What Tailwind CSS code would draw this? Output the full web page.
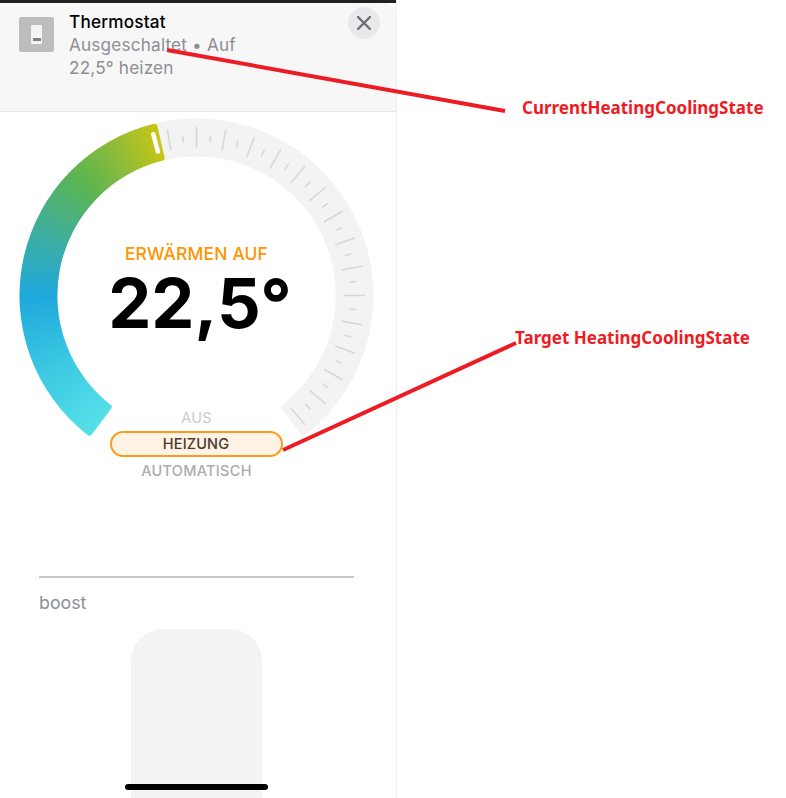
<!doctype html>
<html lang="de">
<head>
<meta charset="utf-8">
<script src="https://cdn.jsdelivr.net/npm/@tailwindcss/browser@4"></script>
</head>
<body class="bg-white font-['Inter',sans-serif]">
<div class="relative w-[786px] h-[798px] overflow-hidden bg-white">
  <div class="w-[397px] h-[798px] flex flex-col border-r border-[#efefef] overflow-hidden">
    <div class="h-[3px] shrink-0 bg-[#222222]"></div>
    <header class="h-[109px] shrink-0 flex items-start bg-[#f7f7f7] border-b border-[#e6e6e6] rounded-tr-xl pl-[19px] pr-[16px]">
      <div class="w-[35px] h-[35px] mt-[14px] bg-[#bdbdbd] rounded-[2px] flex items-center justify-center shrink-0">
        <div class="w-[11px] h-[19px] bg-[#f4f4f4] rounded-[1px] flex items-end justify-center pb-[3px]">
          <div class="w-[8px] h-[3px] bg-[#7f7f7f]"></div>
        </div>
      </div>
      <div class="ml-[15px] flex-1 pt-[7px] text-[17.2px] leading-[23px] tracking-[0.01em]">
        <div class="font-medium text-black">Thermostat</div>
        <div class="text-[#8e8e93]">Ausgeschaltet • Auf</div>
        <div class="text-[#8e8e93]">22,5° heizen</div>
      </div>
      <div class="w-8 h-8 mt-[4px] rounded-full bg-[#e9e9eb] flex items-center justify-center shrink-0">
        <svg width="14" height="14" viewBox="0 0 14 14"><path d="M1 1 13 13M13 1 1 13" stroke="#6e6e73" stroke-width="2.4" stroke-linecap="round"/></svg>
      </div>
    </header>
    <section class="relative h-[464px] shrink-0 flex flex-col items-center w-[393px]">
      <svg class="absolute left-0 top-0" width="396" height="340" viewBox="0 112 396 340">
        <defs>
          <clipPath id="arc"><path d="M87.5 435A177 177 0 0 1 153.7 123.8Q156.7 123 157.4 125.9L164.5 157.2Q165.2 160.1 162.9 160.6A139 139 0 0 0 110.9 405.1Q112.8 406.5 111 408.9L91.8 434.5Q90 436.9 87.5 435Z"/></clipPath>
        </defs>
        <path fill="#f3f3f3" d="M153.7 123.8A177 177 0 0 1 305.5 435Q303 436.9 301.2 434.5L282 408.9Q280.2 406.5 282.1 405.1A139 139 0 0 0 162.9 160.6Z"/>
        <g transform="translate(196.5 295.5)" stroke="#d6d6d6" stroke-width="1.5" stroke-linecap="round">
          <path d="M0-168V-148" transform="rotate(-10)"/><path d="M0-160V-154" transform="rotate(-5)"/>
          <path d="M0-168V-148"/><path d="M0-160V-154" transform="rotate(5)"/>
          <path d="M0-168V-148" transform="rotate(10)"/><path d="M0-160V-154" transform="rotate(15)"/>
          <path d="M0-168V-148" transform="rotate(20)"/><path d="M0-160V-154" transform="rotate(25)"/>
          <path d="M0-168V-148" transform="rotate(30)"/><path d="M0-160V-154" transform="rotate(35)"/>
          <path d="M0-168V-148" transform="rotate(40)"/><path d="M0-160V-154" transform="rotate(45)"/>
          <path d="M0-168V-148" transform="rotate(50)"/><path d="M0-160V-154" transform="rotate(55)"/>
          <path d="M0-168V-148" transform="rotate(60)"/><path d="M0-160V-154" transform="rotate(65)"/>
          <path d="M0-168V-148" transform="rotate(70)"/><path d="M0-160V-154" transform="rotate(75)"/>
          <path d="M0-168V-148" transform="rotate(80)"/><path d="M0-160V-154" transform="rotate(85)"/>
          <path d="M0-168V-148" transform="rotate(90)"/><path d="M0-160V-154" transform="rotate(95)"/>
          <path d="M0-168V-148" transform="rotate(100)"/><path d="M0-160V-154" transform="rotate(105)"/>
          <path d="M0-168V-148" transform="rotate(110)"/><path d="M0-160V-154" transform="rotate(115)"/>
          <path d="M0-168V-148" transform="rotate(120)"/><path d="M0-160V-154" transform="rotate(125)"/>
          <path d="M0-168V-148" transform="rotate(130)"/><path d="M0-160V-154" transform="rotate(135)"/>
          <path d="M0-168V-148" transform="rotate(140)"/>
        </g>
        <g clip-path="url(#arc)">
          <foreignObject x="0" y="112" width="396" height="340">
            <div class="w-[396px] h-[340px] bg-[conic-gradient(from_215deg_at_196.5px_183.5px,#55e0e8_2deg,#3cc9e2_28deg,#1fa8dc_55deg,#3fae9c_78deg,#5bb550_100deg,#8fbc3a_116deg,#c9c612_132deg,#c9c612_360deg)]"></div>
          </foreignObject>
        </g>
        <path d="M0-167V-149" transform="translate(196.5 295.5) rotate(-15)" stroke="#fff" stroke-width="4.5" stroke-linecap="round"/>
      </svg>
      <div class="relative mt-[134px] text-[17.4px] leading-[16px] font-medium text-[#ff9500] tracking-[0.01em]">ERWÄRMEN AUF</div>
      <div class="relative mt-[7px] ml-[7px] text-[68.5px] leading-[70px] font-bold text-black">22,5°</div>
      <div class="relative mt-[71px] text-[14.5px] leading-[16px] text-[#cbcbcb] tracking-[0.02em]">AUS</div>
      <div class="relative mt-[5px] w-[173px] h-[26px] ml-[-1px] rounded-[13px] border-2 border-[#fb9b1c] bg-[#fff3e6] flex items-center justify-center text-[14.5px] text-[#4a3a2c] font-medium tracking-[0.01em]">HEIZUNG</div>
      <div class="relative mt-[6px] text-[14.5px] leading-[16px] text-[#acacac] font-medium tracking-[0.02em]">AUTOMATISCH</div>
    </section>
    <div class="flex-1 relative flex flex-col">
      <div class="mx-[39px] h-[2px] w-[315px] bg-[#c9c9c9] shrink-0"></div>
      <div class="ml-[39px] mt-[14px] text-[17.8px] leading-[22px] text-[#8e8e93]">boost</div>
      <div class="ml-[131px] mt-[15px] w-[131px] flex-1 bg-[#f3f3f3] rounded-t-[32px]"></div>
      <div class="absolute left-[125px] top-[208px] w-[143px] h-[6px] rounded-full bg-black"></div>
    </div>
  </div>
  <svg class="absolute left-0 top-0 pointer-events-none" width="786" height="798" viewBox="0 0 786 798">
    <path d="M167 50 505 111M283 450 516 343" stroke="#ed1c24" stroke-width="4" fill="none"/>
  </svg>
  <div class="absolute left-[522px] top-[97px] text-[17px] leading-[22px] font-bold text-[#ed1c24] font-['Noto_Sans',sans-serif] whitespace-nowrap">CurrentHeatingCoolingState</div>
  <div class="absolute left-[515px] top-[327px] text-[17px] leading-[22px] font-bold text-[#ed1c24] font-['Noto_Sans',sans-serif] whitespace-nowrap">Target HeatingCoolingState</div>
</div>
</body>
</html>
